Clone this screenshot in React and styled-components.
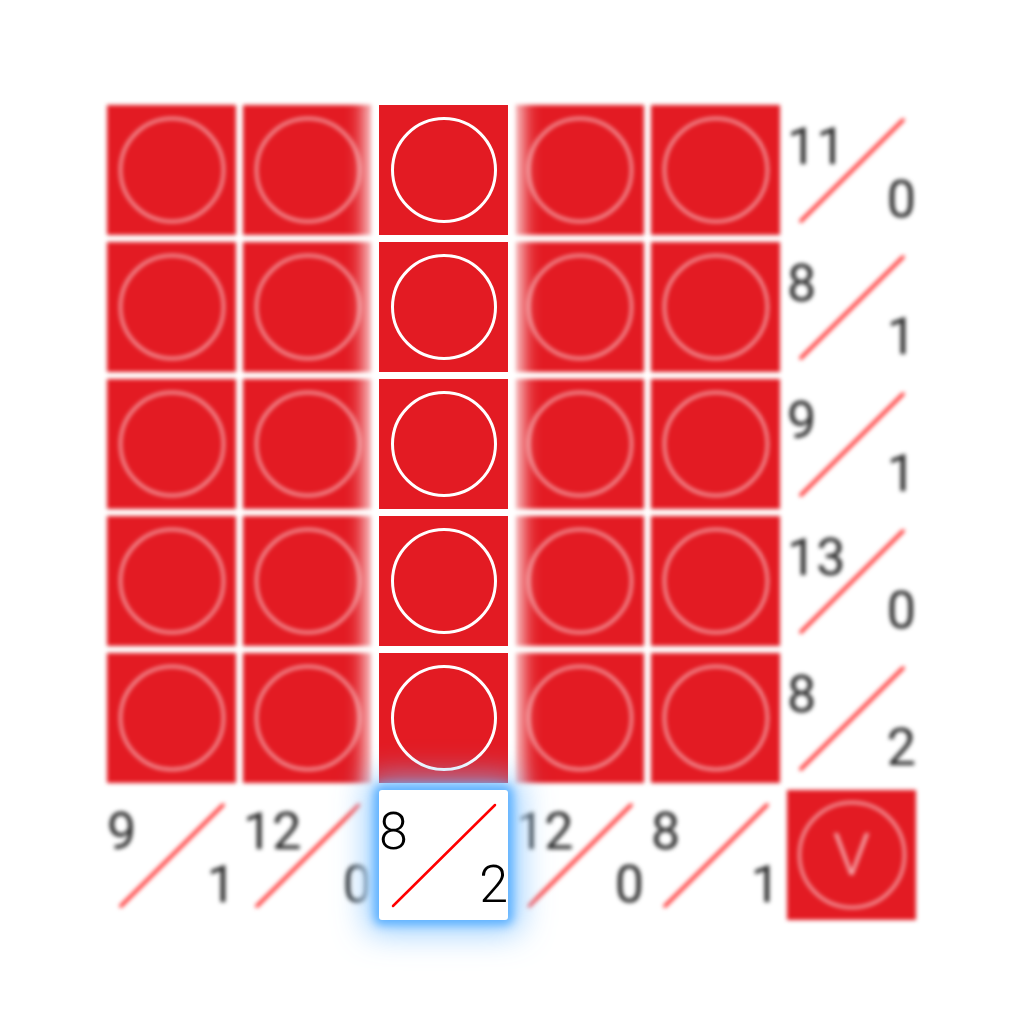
import styled, { createGlobalStyle, css } from "styled-components";

const GlobalStyle = createGlobalStyle`
    body {
        margin: 0;
        background: #ffffff;
        font-family: Roboto, "Liberation Sans", sans-serif;
    }
`;

const RED = "#e31b23";

const Board = styled.div`
    display: flex;
    gap: 7px;
    padding: 105px 0 0 107px;
    height: 1024px;
    box-sizing: border-box;
    overflow: hidden;
`;

const Column = styled.div`
    display: flex;
    flex-direction: column;
    gap: 7px;
    align-self: flex-start;
    ${(p) =>
        p.$focused
            ? css`
                  position: relative;
                  z-index: 1;
                  background: #ffffff;
                  box-shadow: 0 0 18px 13px #ffffff;
              `
            : css`
                  filter: blur(2px);
              `}
`;

const RedCell = styled.div`
    width: 129px;
    height: 130px;
    background: ${RED};
    display: flex;
    align-items: center;
    justify-content: center;
`;

const Ring = styled.div`
    width: ${(p) => p.$size}px;
    height: ${(p) => p.$size}px;
    box-sizing: border-box;
    border-radius: 50%;
    border: ${(p) => (p.$dim ? "3px solid rgba(255,255,255,0.6)" : "3px solid #ffffff")};
    display: flex;
    align-items: center;
    justify-content: center;
    color: rgba(255, 255, 255, 0.65);
    font-size: 60px;
    font-weight: 300;
    line-height: 60px;
`;

const NumberCell = styled.div`
    position: relative;
    width: 129px;
    height: 130px;
    box-sizing: border-box;
    padding: 16px 0 9px;
    display: flex;
    flex-direction: column;
    justify-content: space-between;
    font-size: 52px;
    line-height: 52px;
    ${(p) =>
        p.$focused
            ? css`
                  font-weight: 300;
                  color: #000000;
                  background: #ffffff;
                  border-radius: 3px;
                  box-shadow: 0 0 10px 5px rgba(95, 178, 255, 1),
                      0 0 32px 12px rgba(125, 192, 255, 0.8);
              `
            : css`
                  font-weight: 400;
                  color: #2a2a2a;
              `}
`;

const Top = styled.span`
    align-self: flex-start;
`;

const Bottom = styled.span`
    align-self: flex-end;
`;

const Slash = styled.svg`
    position: absolute;
    inset: 0;
    width: 100%;
    height: 100%;
    pointer-events: none;
`;

const NumCell = ({ top, bottom, focused }) => (
    <NumberCell $focused={focused}>
        <Top>{top}</Top>
        <Bottom>{bottom}</Bottom>
        <Slash viewBox="0 0 129 130">
            <line
                x1="14"
                y1="116"
                x2="116"
                y2="15"
                stroke={focused ? "#ff0000" : "#ff2a2a"}
                strokeWidth={focused ? 2.5 : 3.5}
                strokeLinecap="round"
            />
        </Slash>
    </NumberCell>
);

const rowClues = [
    [11, 0],
    [8, 1],
    [9, 1],
    [13, 0],
    [8, 2],
];

const colClues = [
    [9, 1],
    [12, 0],
    [8, 2],
    [12, 0],
    [8, 1],
];

const FOCUS = 2;

const App = () => {
    return (
        <>
            <GlobalStyle />
            <Board>
                {colClues.map((clue, c) => {
                    const focused = c === FOCUS;
                    return (
                        <Column key={c} $focused={focused}>
                            {rowClues.map((_, r) => (
                                <RedCell key={r}>
                                    <Ring $size={106} $dim={!focused} />
                                </RedCell>
                            ))}
                            <NumCell top={clue[0]} bottom={clue[1]} focused={focused} />
                        </Column>
                    );
                })}
                <Column>
                    {rowClues.map((clue, r) => (
                        <NumCell key={r} top={clue[0]} bottom={clue[1]} />
                    ))}
                    <RedCell>
                        <Ring $size={108} $dim>
                            V
                        </Ring>
                    </RedCell>
                </Column>
            </Board>
        </>
    );
};

export default App;
